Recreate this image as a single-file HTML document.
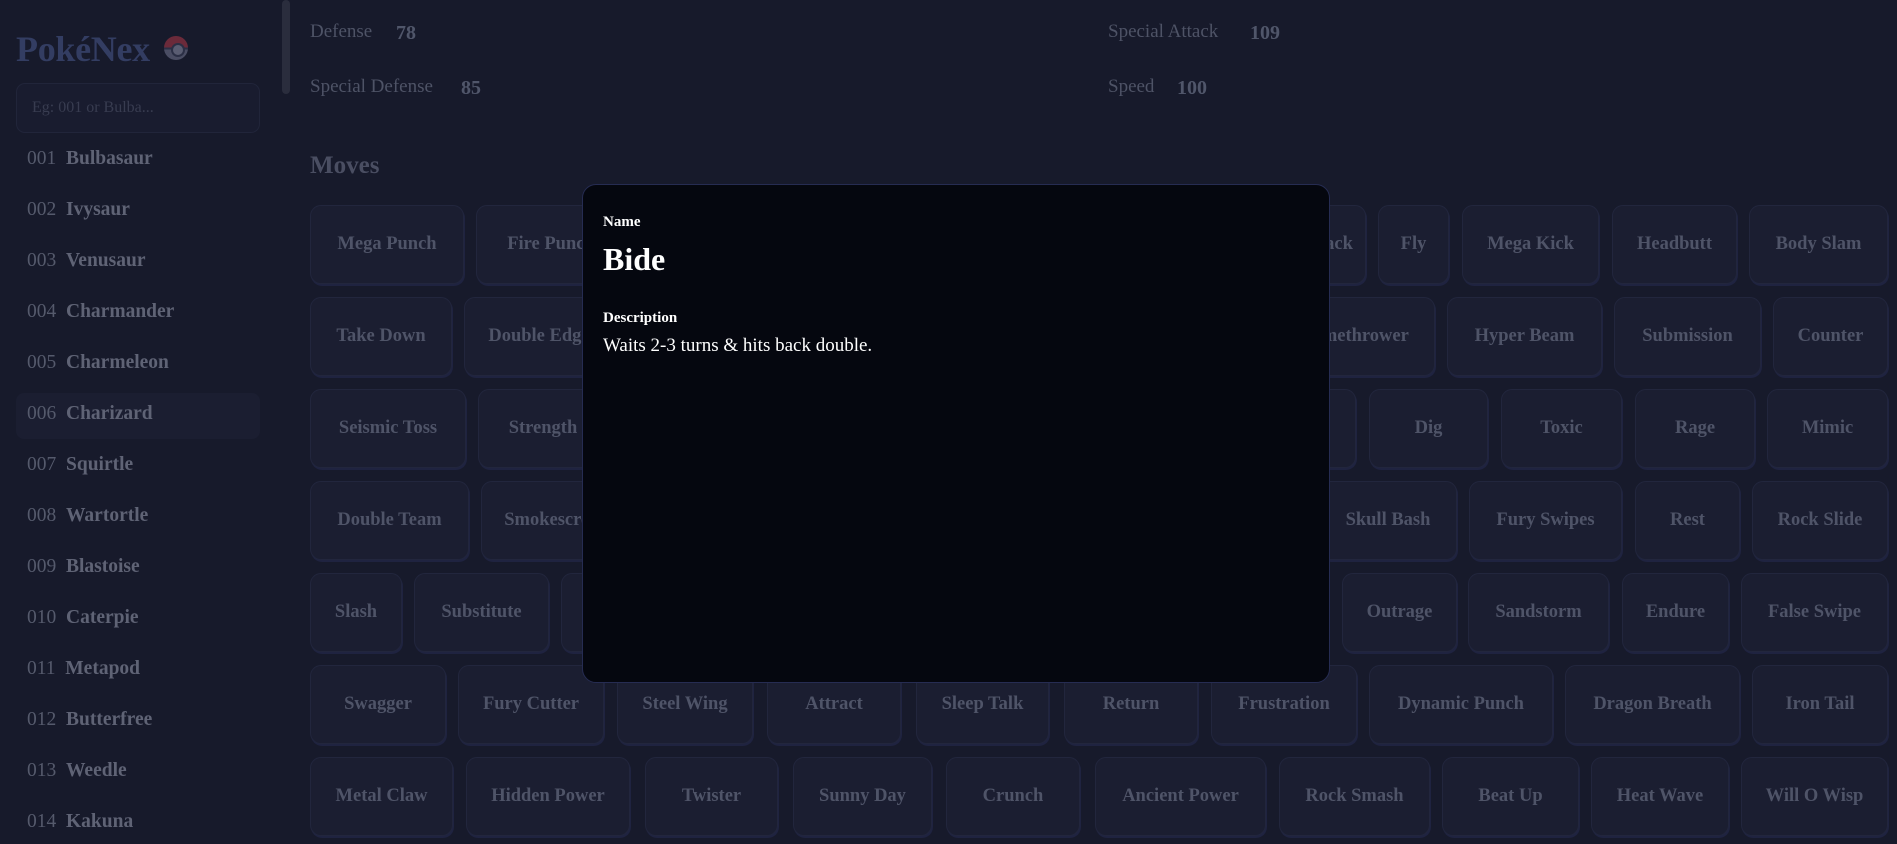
<!DOCTYPE html>
<html><head><meta charset="utf-8"><style>
*{box-sizing:border-box;margin:0;padding:0}
body{width:1897px;height:844px;overflow:hidden;background:#171a2b;font-family:"Liberation Serif",serif;position:relative}
.a{position:absolute}
.logo{left:16px;top:28px;font-size:36px;font-weight:bold;color:#333d62;letter-spacing:-0.3px}
.ball{left:164px;top:36px;width:24px;height:24px;border-radius:50%;background:linear-gradient(#6b2a3a 0 48%,#2b2f45 48% 56%,#4a4d63 56%);overflow:hidden}
.ball:after{content:"";position:absolute;left:7px;top:7px;width:10px;height:10px;border-radius:50%;background:#5a5d72;border:2px solid #2b2f45}
.search{left:16px;top:83px;width:244px;height:50px;border:1px solid #21253a;border-radius:9px;background:#191c2f;color:#383c50;font-size:16px;padding:15px 15px}
.sb{left:282px;top:0;width:8px;height:94px;border-radius:4px;background:#2a2d3d}
.li{left:27px;font-size:19.5px;color:#555a6c;white-space:pre}
.li b{color:#5f6375}
.sel{left:16px;top:393px;width:244px;height:46px;background:#1b1e31;border-radius:8px}
.st{font-size:19px;color:#4e5366}
.sv{font-size:20px;font-weight:bold;color:#50566a}
.mv{left:310px;top:152px;font-size:25px;font-weight:bold;color:#4a4e62}
.b{height:79px;background:#1b1e31;border:1px solid #22263d;border-radius:11px;box-shadow:1px 2px 0 #1f2340;color:#4f5468;font-size:18.5px;font-weight:bold;display:flex;align-items:center;justify-content:center;white-space:nowrap;overflow:hidden}
.modal{left:582px;top:184px;width:748px;height:499px;background:#05070f;border:1px solid #262c52;border-radius:14px;padding:28px 20px;color:#fff}
</style></head><body>
<div class="a logo">PokéNex</div>
<div class="a ball"></div>
<div class="a search">Eg: 001 or Bulba...</div>
<div class="a sb"></div>
<div class="a sel"></div>
<div class="a li" style="top:148px">001  <b>Bulbasaur</b></div>
<div class="a li" style="top:199px">002  <b>Ivysaur</b></div>
<div class="a li" style="top:250px">003  <b>Venusaur</b></div>
<div class="a li" style="top:301px">004  <b>Charmander</b></div>
<div class="a li" style="top:352px">005  <b>Charmeleon</b></div>
<div class="a li" style="top:403px">006  <b>Charizard</b></div>
<div class="a li" style="top:454px">007  <b>Squirtle</b></div>
<div class="a li" style="top:505px">008  <b>Wartortle</b></div>
<div class="a li" style="top:556px">009  <b>Blastoise</b></div>
<div class="a li" style="top:607px">010  <b>Caterpie</b></div>
<div class="a li" style="top:658px">011  <b>Metapod</b></div>
<div class="a li" style="top:709px">012  <b>Butterfree</b></div>
<div class="a li" style="top:760px">013  <b>Weedle</b></div>
<div class="a li" style="top:811px">014  <b>Kakuna</b></div>

<div class="a st" style="left:310px;top:21px">Defense</div><div class="a sv" style="left:396px;top:22px">78</div>
<div class="a st" style="left:310px;top:76px">Special Defense</div><div class="a sv" style="left:461px;top:77px">85</div>
<div class="a st" style="left:1108px;top:21px">Special Attack</div><div class="a sv" style="left:1250px;top:22px">109</div>
<div class="a st" style="left:1108px;top:76px">Speed</div><div class="a sv" style="left:1177px;top:77px">100</div>
<div class="a mv">Moves</div>

<div class="a b" style="top:205px;left:310px;width:154px">Mega Punch</div>
<div class="a b" style="top:205px;left:476px;width:150px">Fire Punch</div>
<div class="a b" style="top:205px;left:1240px;width:126px">Wing Attack</div>
<div class="a b" style="top:205px;left:1378px;width:71px">Fly</div>
<div class="a b" style="top:205px;left:1462px;width:137px">Mega Kick</div>
<div class="a b" style="top:205px;left:1612px;width:125px">Headbutt</div>
<div class="a b" style="top:205px;left:1749px;width:139px">Body Slam</div>
<div class="a b" style="top:297px;left:310px;width:142px">Take Down</div>
<div class="a b" style="top:297px;left:464px;width:150px">Double Edge</div>
<div class="a b" style="top:297px;left:1270px;width:165px">Flamethrower</div>
<div class="a b" style="top:297px;left:1447px;width:155px">Hyper Beam</div>
<div class="a b" style="top:297px;left:1614px;width:147px">Submission</div>
<div class="a b" style="top:297px;left:1773px;width:115px">Counter</div>
<div class="a b" style="top:389px;left:310px;width:156px">Seismic Toss</div>
<div class="a b" style="top:389px;left:478px;width:130px">Strength</div>
<div class="a b" style="top:389px;left:1260px;width:96px">Fire</div>
<div class="a b" style="top:389px;left:1369px;width:119px">Dig</div>
<div class="a b" style="top:389px;left:1501px;width:121px">Toxic</div>
<div class="a b" style="top:389px;left:1635px;width:120px">Rage</div>
<div class="a b" style="top:389px;left:1767px;width:121px">Mimic</div>
<div class="a b" style="top:481px;left:310px;width:159px">Double Team</div>
<div class="a b" style="top:481px;left:481px;width:150px">Smokescreen</div>
<div class="a b" style="top:481px;left:1319px;width:138px">Skull Bash</div>
<div class="a b" style="top:481px;left:1469px;width:153px">Fury Swipes</div>
<div class="a b" style="top:481px;left:1635px;width:105px">Rest</div>
<div class="a b" style="top:481px;left:1752px;width:136px">Rock Slide</div>
<div class="a b" style="top:573px;left:310px;width:92px">Slash</div>
<div class="a b" style="top:573px;left:414px;width:135px">Substitute</div>
<div class="a b" style="top:573px;left:561px;width:130px">Thief</div>
<div class="a b" style="top:573px;left:1342px;width:115px">Outrage</div>
<div class="a b" style="top:573px;left:1468px;width:141px">Sandstorm</div>
<div class="a b" style="top:573px;left:1622px;width:107px">Endure</div>
<div class="a b" style="top:573px;left:1741px;width:147px">False Swipe</div>
<div class="a b" style="top:665px;left:310px;width:136px">Swagger</div>
<div class="a b" style="top:665px;left:458px;width:146px">Fury Cutter</div>
<div class="a b" style="top:665px;left:617px;width:136px">Steel Wing</div>
<div class="a b" style="top:665px;left:767px;width:134px">Attract</div>
<div class="a b" style="top:665px;left:916px;width:133px">Sleep Talk</div>
<div class="a b" style="top:665px;left:1064px;width:134px">Return</div>
<div class="a b" style="top:665px;left:1211px;width:146px">Frustration</div>
<div class="a b" style="top:665px;left:1369px;width:184px">Dynamic Punch</div>
<div class="a b" style="top:665px;left:1565px;width:175px">Dragon Breath</div>
<div class="a b" style="top:665px;left:1752px;width:136px">Iron Tail</div>
<div class="a b" style="top:757px;left:310px;width:143px">Metal Claw</div>
<div class="a b" style="top:757px;left:466px;width:164px">Hidden Power</div>
<div class="a b" style="top:757px;left:645px;width:133px">Twister</div>
<div class="a b" style="top:757px;left:793px;width:139px">Sunny Day</div>
<div class="a b" style="top:757px;left:946px;width:134px">Crunch</div>
<div class="a b" style="top:757px;left:1095px;width:171px">Ancient Power</div>
<div class="a b" style="top:757px;left:1279px;width:151px">Rock Smash</div>
<div class="a b" style="top:757px;left:1442px;width:137px">Beat Up</div>
<div class="a b" style="top:757px;left:1591px;width:138px">Heat Wave</div>
<div class="a b" style="top:757px;left:1741px;width:147px">Will O Wisp</div>

<div class="a modal">
<div style="font-size:15px;font-weight:bold;line-height:18px">Name</div>
<div style="font-size:32px;font-weight:bold;line-height:36px;margin-top:10px">Bide</div>
<div style="font-size:15px;font-weight:bold;line-height:18px;margin-top:32px">Description</div>
<div style="font-size:19px;line-height:22px;margin-top:8px">Waits 2-3 turns &amp; hits back double.</div>
</div>
</body></html>
